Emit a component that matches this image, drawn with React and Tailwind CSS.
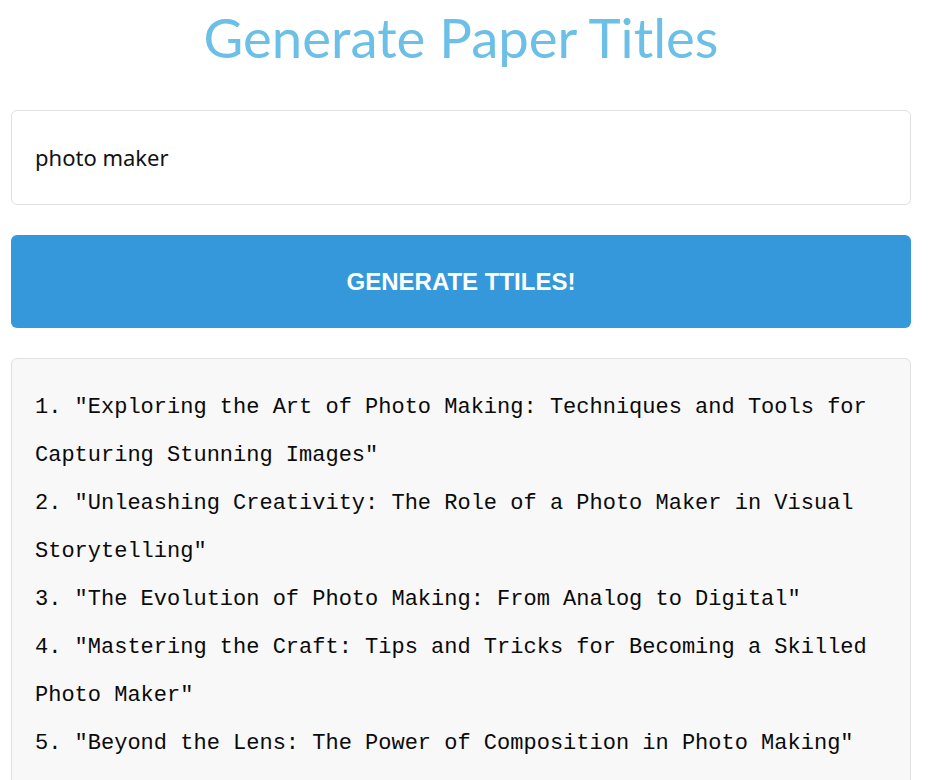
const titles = [
  '1. "Exploring the Art of Photo Making: Techniques and Tools for Capturing Stunning Images"',
  '2. "Unleashing Creativity: The Role of a Photo Maker in Visual Storytelling"',
  '3. "The Evolution of Photo Making: From Analog to Digital"',
  '4. "Mastering the Craft: Tips and Tricks for Becoming a Skilled Photo Maker"',
  '5. "Beyond the Lens: The Power of Composition in Photo Making"',
];

const App = () => {
  return (
    <div className="w-full min-h-screen bg-white pl-[11px]">
      <div className="w-[900px] flex flex-col">
        <h1 className="text-center text-[54.5px] leading-[74px] text-[#6cbfe6] font-normal font-['Lato',sans-serif]">
          Generate Paper Titles
        </h1>

        <div className="mt-[36px] h-[95px] flex items-center px-[23px] border border-[#e0e0e0] rounded-md bg-white">
          <span className="text-[22px] text-[#111] font-['Noto_Sans',sans-serif]">photo maker</span>
        </div>

        <button className="mt-[30px] h-[93px] w-full rounded-md bg-[#3498db] text-white text-[24px] font-bold font-['Liberation_Sans',Arial,sans-serif]">
          GENERATE TTILES!
        </button>

        <div className="mt-[30px] border border-[#e0e0e0] rounded-md bg-[#f8f8f8] px-[23px] pt-[25px] pb-6">
          {titles.map((t, i) => (
            <p key={i} className="text-[22px] leading-[48px] text-[#0a0a0a] font-['Liberation_Mono',monospace]">
              {t}
            </p>
          ))}
        </div>
      </div>
    </div>
  );
};

export default App;
